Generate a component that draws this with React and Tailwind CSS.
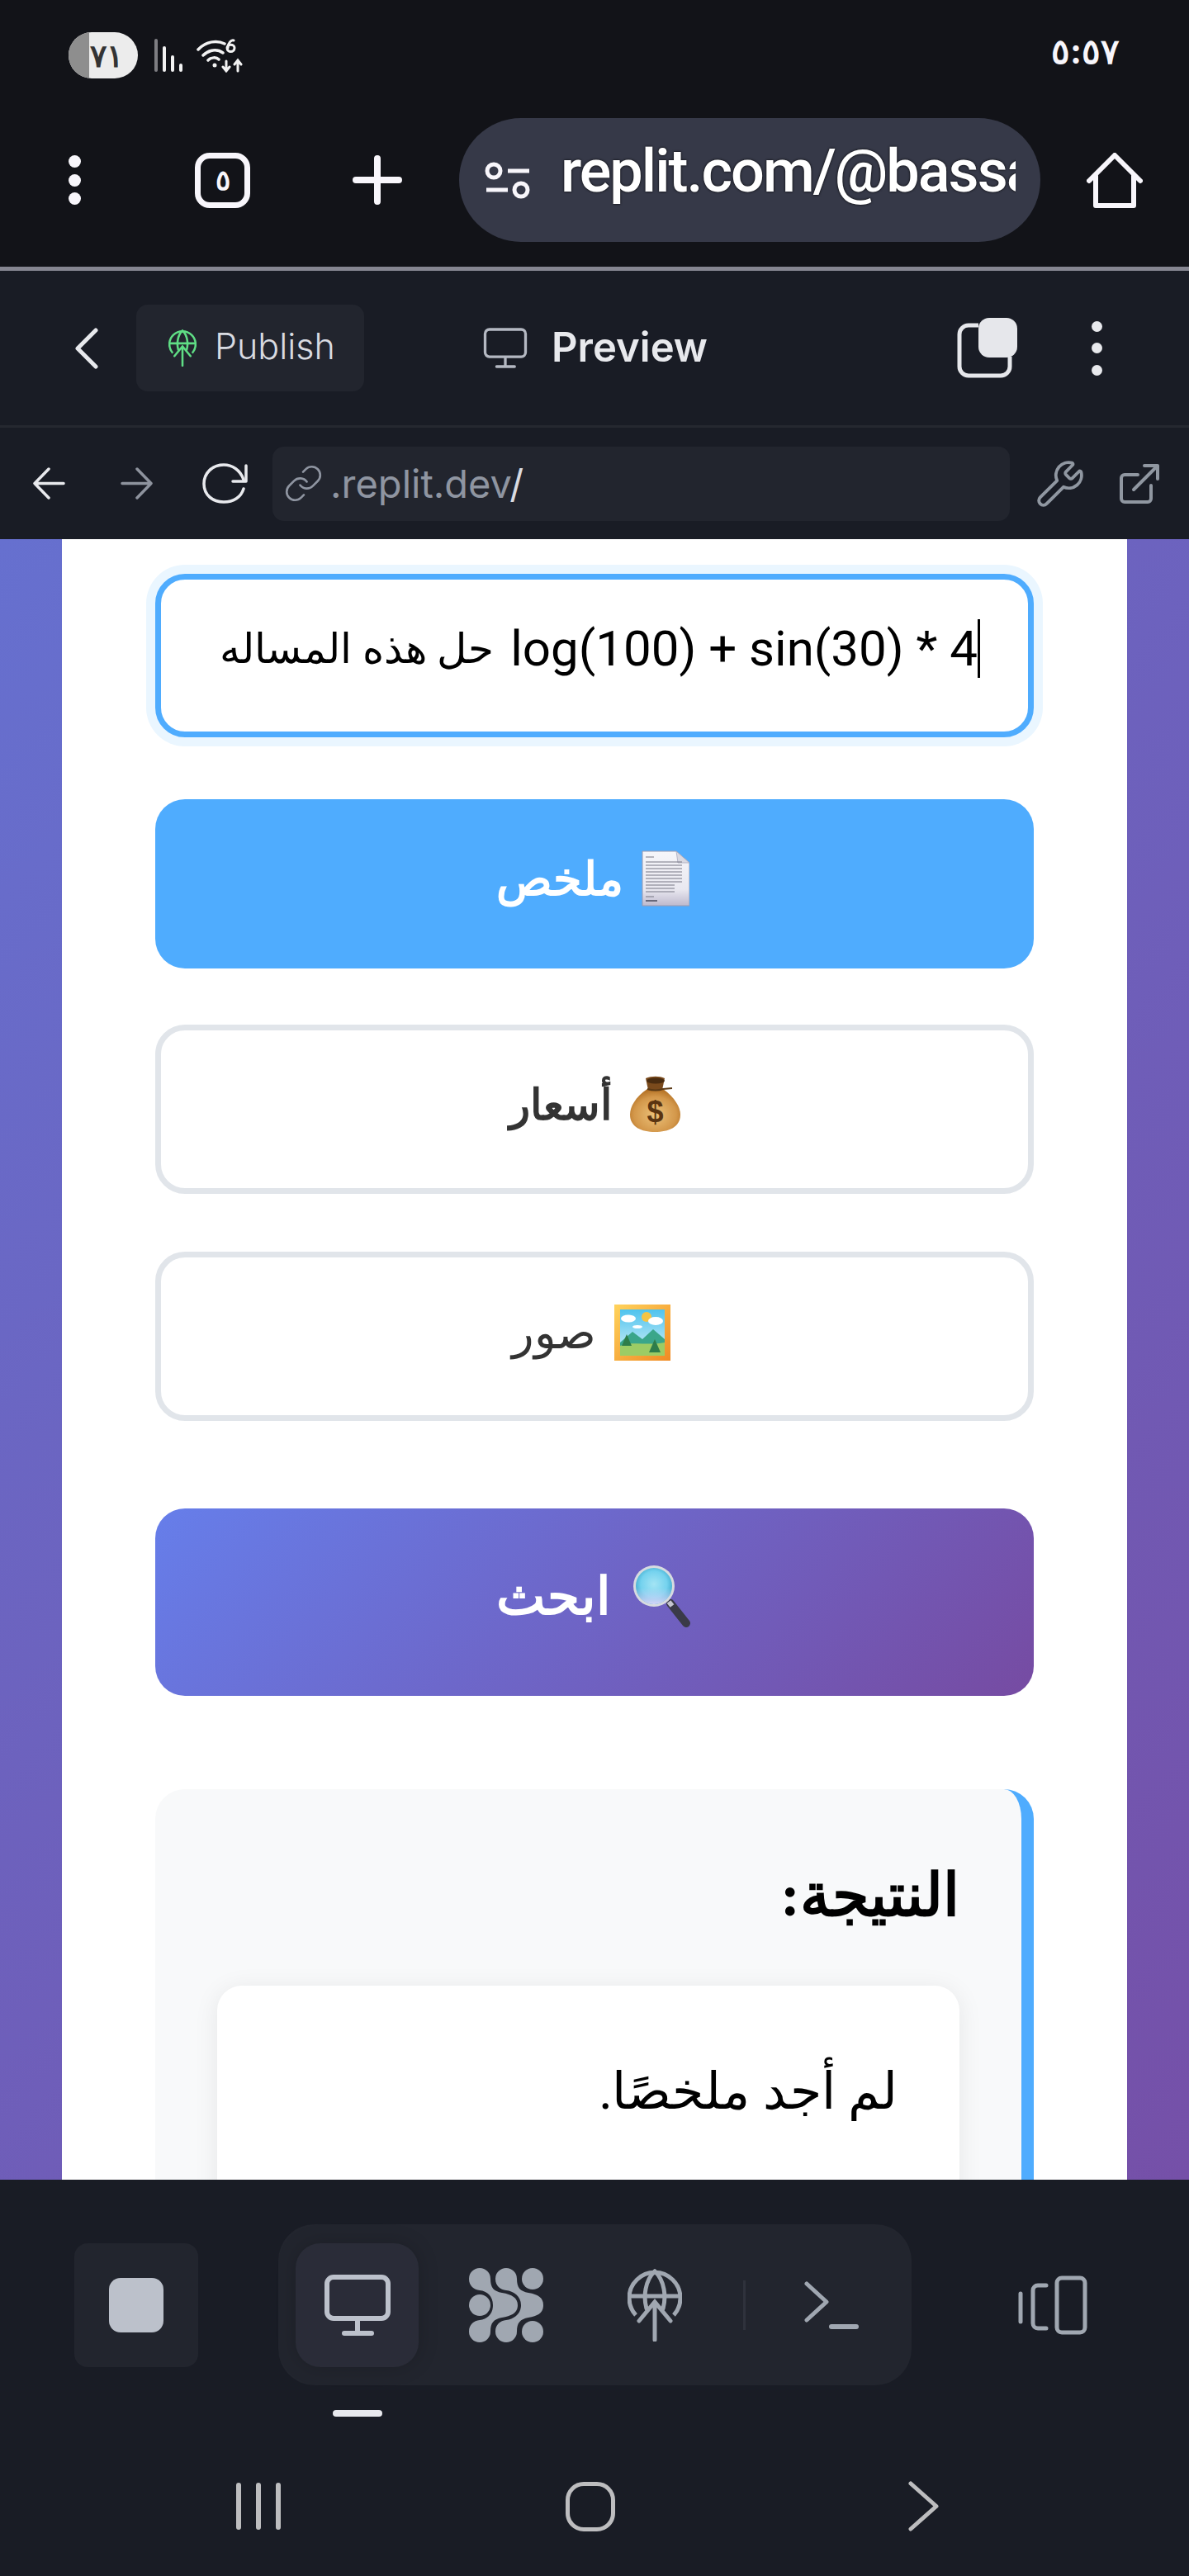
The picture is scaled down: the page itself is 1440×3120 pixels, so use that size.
import { Link as LinkIcon, Wrench } from 'lucide-react'

function Dots({ className, r = 7 }) {
  return (
    <div className={'flex flex-col items-center justify-between ' + className}>
      <span className="rounded-full bg-current" style={{ width: r * 2, height: r * 2 }} />
      <span className="rounded-full bg-current" style={{ width: r * 2, height: r * 2 }} />
      <span className="rounded-full bg-current" style={{ width: r * 2, height: r * 2 }} />
    </div>
  )
}

function PublishGlobe({ className, stroke = 5 }) {
  return (
    <svg viewBox="0 0 66 88" fill="none" stroke="currentColor" strokeWidth={stroke} strokeLinecap="round" className={className}>
      <path d="M10 56 A31 31 0 1 1 56 56" strokeLinecap="butt" />
      <path d="M33 3 C21 14 19 34 23 48" />
      <path d="M33 3 C45 14 47 34 43 48" />
      <path d="M3 33 H63" />
      <path d="M33 86 V40 M14 63 L33 40 L52 63" />
    </svg>
  )
}

function Monitor({ className, stroke = 4 }) {
  return (
    <svg viewBox="0 0 80 74" fill="none" stroke="currentColor" strokeWidth={stroke} strokeLinecap="round" className={className}>
      <rect x="3" y="3" width="74" height="50" rx="8" />
      <path d="M40 53 V70" strokeLinecap="butt" />
      <path d="M24 71 H57" />
    </svg>
  )
}

function DocEmoji() {
  return (
    <svg viewBox="0 0 58 68" className="w-[58px] h-[68px] shrink-0">
      <defs>
        <linearGradient id="paper" x1="0" y1="0" x2="0" y2="1">
          <stop offset="0" stopColor="#f6f6fa" />
          <stop offset="0.7" stopColor="#e9e8f0" />
          <stop offset="1" stopColor="#bdb9cd" />
        </linearGradient>
      </defs>
      <path d="M1 1 H42 L58 15 V67 H1 Z" fill="url(#paper)" stroke="#9a9ab0" strokeWidth="1" />
      <path d="M42 1 L44 15 H58 Z" fill="#d9d9e2" stroke="#a9a9bc" strokeWidth="0.8" />
      <path d="M5 8 H15 M5 14 H49 M5 18 H49 M5 22 H49 M5 26 H49 M5 30 H49 M5 34 H49 M5 38 H49 M5 42 H40 M5 46 H40 M5 50 H40 M5 56 H15" stroke="#777784" strokeWidth="1.1" fill="none" />
      <path d="M5 61 H19" stroke="#68687a" strokeWidth="2" />
    </svg>
  )
}

function BagEmoji() {
  return (
    <svg viewBox="0 0 61 69" className="w-[61px] h-[69px] shrink-0">
      <defs>
        <radialGradient id="bag" cx="0.5" cy="0.6" r="0.6">
          <stop offset="0" stopColor="#ecc27a" />
          <stop offset="0.7" stopColor="#d3974a" />
          <stop offset="1" stopColor="#b26f22" />
        </radialGradient>
      </defs>
      <path d="M21 16 C6 26 0 38 0 47 C0 62 14 68 30 68 C47 68 61 62 61 47 C61 38 54 26 40 16 Z" fill="url(#bag)" />
      <path d="M19 3 C26 0 36 0 42 3 L39 17 H22 Z" fill="#7a4a1c" />
      <ellipse cx="31" cy="6" rx="11" ry="3.5" fill="#4a2c10" />
      <path d="M21 16 C28 18 34 18 40 16 L51 15" stroke="#5b3a16" strokeWidth="2" fill="none" />
      <text x="30.5" y="56" textAnchor="middle" fontSize="36" fontWeight="700" fill="#5a3411" className="[font-family:'Liberation_Sans',sans-serif]">$</text>
    </svg>
  )
}

function PictureEmoji() {
  return (
    <svg viewBox="0 0 68 68" className="w-[68px] h-[68px] shrink-0">
      <defs>
        <linearGradient id="frame" x1="0" y1="0" x2="1" y2="1">
          <stop offset="0" stopColor="#ffd35c" />
          <stop offset="1" stopColor="#f08a24" />
        </linearGradient>
        <linearGradient id="sky" x1="0" y1="0" x2="0" y2="1">
          <stop offset="0" stopColor="#4fc3ee" />
          <stop offset="1" stopColor="#d4f1f8" />
        </linearGradient>
      </defs>
      <rect width="68" height="68" fill="url(#frame)" />
      <rect x="7" y="6" width="54" height="56" fill="url(#sky)" />
      <circle cx="39" cy="15" r="6" fill="#f6c445" />
      <ellipse cx="17" cy="17" rx="9" ry="4.5" fill="#fff" />
      <ellipse cx="50" cy="20" rx="9" ry="5" fill="#fff" />
      <ellipse cx="28" cy="27" rx="6" ry="2" fill="#fff" />
      <path d="M7 46 L22 33 L34 42 L47 30 L61 42 V62 H7 Z" fill="#3aa68a" />
      <path d="M7 50 C24 44 40 50 61 46 V62 H7 Z" fill="#9ccc65" />
      <path d="M15 36 L21 50 H9 Z M49 42 L56 58 H42 Z" fill="#2e7d4a" />
    </svg>
  )
}

function GlassEmoji() {
  return (
    <svg viewBox="0 0 70 77" className="w-[70px] h-[77px] shrink-0">
      <defs>
        <radialGradient id="lens" cx="0.5" cy="0.45" r="0.6">
          <stop offset="0" stopColor="#a4e4f4" />
          <stop offset="0.6" stopColor="#74d2ee" />
          <stop offset="1" stopColor="#2f9fc4" />
        </radialGradient>
        <linearGradient id="lensLow" x1="0" y1="0" x2="0" y2="1">
          <stop offset="0.55" stopColor="#d8d6fa" stopOpacity="0" />
          <stop offset="1" stopColor="#d8d6fa" />
        </linearGradient>
      </defs>
      <path d="M46 48 L65 72" stroke="#3a3a48" strokeWidth="10" strokeLinecap="round" />
      <path d="M44 46 L48 51" stroke="#c5c5cf" strokeWidth="6" />
      <circle cx="26" cy="27" r="25" fill="#d7dbe0" />
      <circle cx="26" cy="27" r="22" fill="url(#lens)" />
      <circle cx="26" cy="27" r="22" fill="url(#lensLow)" />
    </svg>
  )
}

function AgentLogo({ className }) {
  return (
    <svg viewBox="0 0 90 90" fill="#a0a7b1" className={className}>
      <path d="M0 13 A13 13 0 0 1 26 13 C26 24 30 28 40 30 C52 32 59 36 59 45 C59 54 52 58 40 60 C30 62 26 66 26 77 A13 13 0 0 1 0 77 C0 68 6 64 13 63 C22 62 29 56 29 45 C29 34 22 28 13 27 C6 26 0 22 0 13 Z" />
      <path d="M32 13 A13 13 0 0 1 58 13 C58 24 62 28 72 30 C84 32 90 36 90 45 C90 54 84 58 72 60 C62 62 58 66 58 77 A13 13 0 0 1 32 77 C32 68 38 64 45 63 C54 62 63 56 63 45 C63 34 54 28 45 27 C38 26 32 22 32 13 Z" />
      <circle cx="13" cy="45" r="13" />
      <circle cx="77" cy="13" r="13" />
      <circle cx="77" cy="77" r="13" />
    </svg>
  )
}

const optionBtn = "h-[205px] rounded-[36px] flex items-center justify-center gap-[22px] font-semibold"

export default function App() {
  return (
    <div className="w-[1440px] h-[3120px] flex flex-col overflow-hidden bg-[#191c25] [font-family:Inter,'Noto_Sans',sans-serif]">
      {/* phone + browser chrome */}
      <div className="h-[323px] shrink-0 bg-[#121318] text-[#f8f6fb] flex flex-col">
        <div className="h-[134px] flex items-center">
          <div className="ml-[83px] w-[84px] h-[56px] rounded-[28px] overflow-hidden flex bg-[#ececec]">
            <div className="w-[25px] bg-[#8e8e8e]" />
            <div className="flex-1 flex items-center pl-[1px] text-[38px] font-semibold leading-none text-[#333]">٧١</div>
          </div>
          <svg viewBox="0 0 35 40" className="ml-[20px] w-[35px] h-[40px]" strokeLinecap="round" strokeWidth="4" fill="none">
            <path d="M2 2 V38" stroke="#7e7e82" />
            <path d="M12 11 V38 M22 22 V38 M32 32 V38" stroke="#f2f2f2" />
          </svg>
          <svg viewBox="0 0 57 42" className="ml-[16px] w-[57px] h-[42px]" fill="none" stroke="#f2f2f2" strokeWidth="3.5" strokeLinecap="round">
            <path d="M2 14 C12 3 26 3 34 7 M8 21 C15 14 25 13 32 18 M14 27 C18 23 24 23 27 26" />
            <circle cx="22" cy="33" r="2.5" fill="#f2f2f2" stroke="none" />
            <path d="M38 12 C38 6 42 2 45 3 M37 12 C37 18 46 18 46 12 C46 7 37 7 37 12 M36 28 V40 M32 35 L36 40 L40 35 M50 28 V40 M46 32 L50 27 L54 32" strokeWidth="3" />
          </svg>
          <div dir="ltr" className="ml-auto mr-[84px] mb-[10px] text-[42px] font-bold leading-none">٥:٥٧</div>
        </div>

        <div className="mt-[9px] h-[150px] flex items-center">
          <Dots className="ml-[83px] w-[15px] h-[60px]" r={7.5} />
          <div className="ml-[138px] w-[67px] h-[67px] rounded-[18px] border-[7px] border-[#f8f6fb] flex items-center justify-center text-[34px] font-bold leading-none">٥</div>
          <svg viewBox="0 0 60 60" className="ml-[124px] w-[60px] h-[60px]" stroke="#f8f6fb" strokeWidth="8" strokeLinecap="round">
            <path d="M4 30 H56 M30 4 V56" />
          </svg>
          <div className="ml-[69px] w-[704px] h-[150px] rounded-[75px] bg-[#363948] flex items-center">
            <svg viewBox="0 0 56 47" className="ml-[31px] w-[56px] h-[47px] shrink-0" fill="none" stroke="#f8f6fb" strokeWidth="5">
              <circle cx="11" cy="12" r="8" />
              <path d="M28 12 H54 M2 35 H28" />
              <circle cx="44" cy="35" r="8" />
            </svg>
            <div className="ml-[36px] mb-[20px] w-[551px] overflow-hidden whitespace-nowrap text-[72px] font-medium leading-[1.2] tracking-[-2px] text-white [font-family:Roboto,sans-serif] [text-shadow:0_0_3px_#000]">replit.com/@bassam</div>
          </div>
          <svg viewBox="0 0 68 67" className="ml-[56px] w-[68px] h-[67px]" fill="none" stroke="#f8f6fb" strokeWidth="6" strokeLinecap="round" strokeLinejoin="round">
            <path d="M3 34 L34 3 L65 34 M11 28 V64 H57 V28" />
          </svg>
        </div>
      </div>
      <div className="h-[5px] shrink-0 bg-[#868691]" />

      {/* replit header */}
      <div className="h-[187px] shrink-0 flex items-center border-b-[3px] border-[#252830] box-content">
        <svg viewBox="0 0 28 50" className="ml-[91px] w-[28px] h-[50px]" fill="none" stroke="#e8e9ed" strokeWidth="5" strokeLinecap="round" strokeLinejoin="round">
          <path d="M25 3 L3 25 L25 47" />
        </svg>
        <div className="ml-[46px] w-[276px] h-[105px] rounded-[14px] bg-[#22252e] flex items-center pl-[39px]">
          <PublishGlobe className="w-[34px] h-[45px] text-[#5fdd85]" />
          <span className="ml-[22px] mb-[5px] text-[43px] font-light leading-none text-[#d9dbe1]">Publish</span>
        </div>
        <Monitor className="ml-[144px] w-[54px] h-[49px] text-[#b4b8c2]" stroke={5} />
        <span className="ml-[29px] mb-[2px] text-[49px] font-semibold leading-none text-[#e8e9ed]">Preview</span>
        <svg viewBox="0 0 73 73" className="ml-auto w-[73px] h-[73px]" fill="none">
          <path d="M26 9 H14 a11 11 0 0 0 -11 11 V59 a11 11 0 0 0 11 11 H53 a11 11 0 0 0 11 -11 V47" stroke="#e6e7eb" strokeWidth="5" />
          <rect x="26" y="0" width="47" height="48" rx="13" fill="#e6e7eb" />
        </svg>
        <Dots className="ml-[89px] mr-[105px] w-[14px] h-[66px] text-[#e8e9ed]" r={6.5} />
      </div>

      {/* url row */}
      <div className="h-[135px] shrink-0 flex items-center">
        <svg viewBox="0 0 39 39" className="ml-[40px] w-[39px] h-[39px]" fill="none" stroke="#e8e9ed" strokeWidth="3.5" strokeLinecap="round" strokeLinejoin="round">
          <path d="M37 19.5 H2 M19 2 L2 19.5 L19 37" />
        </svg>
        <svg viewBox="0 0 39 39" className="ml-[67px] w-[39px] h-[39px]" fill="none" stroke="#8e939e" strokeWidth="3.5" strokeLinecap="round" strokeLinejoin="round">
          <path d="M2 19.5 H37 M20 2 L37 19.5 L20 37" />
        </svg>
        <svg viewBox="0 0 55 49" className="ml-[60px] w-[55px] h-[49px]" fill="none" stroke="#e8e9ed" strokeWidth="3.5" strokeLinecap="round" strokeLinejoin="round">
          <path d="M50 20 C46 8 36 2 26 2 C12 2 2 12 2 25 C2 38 12 47 26 47 C38 47 47 41 50 31" />
          <path d="M53 3 V22 H37" />
        </svg>
        <div className="ml-[30px] w-[893px] h-[90px] rounded-[14px] bg-[#22252e] flex items-center pl-[17px]">
          <LinkIcon size={49} strokeWidth={1.3} className="-m-[4px] text-[#8f95a1]" />
          <span className="ml-[12px] text-[47px] leading-none text-[#8f95a1]">.replit.dev<span className="text-[#d9dbe1]">/</span></span>
        </div>
        <Wrench size={62} strokeWidth={1.5} className="ml-[30px] -mr-[5px] text-[#9097a1]" />
        <svg viewBox="0 0 50 50" className="ml-[45px] w-[50px] h-[50px]" fill="none" stroke="#9097a1" strokeWidth="4" strokeLinecap="round" strokeLinejoin="round">
          <path d="M23 14 H7 a4 4 0 0 0 -4 4 V43 a4 4 0 0 0 4 4 H35 a4 4 0 0 0 4 -4 V27" />
          <path d="M18 32 L47 3 M31 3 H47 V19" />
        </svg>
      </div>

      {/* page */}
      <main className="flex-1 min-h-0 overflow-hidden bg-[linear-gradient(135deg,#6670cf,#7550a8)]">
        <div className="mx-[75px] h-full bg-white pt-[42px] px-[113px] flex flex-col">
          <div dir="ltr" className="h-[198px] shrink-0 rounded-[36px] border-[7px] border-[#4facfe] bg-white shadow-[0_0_0_11px_#eaf6ff] flex items-center justify-end pr-[58px] pb-[17px] leading-none text-black [font-family:Roboto,sans-serif]">
            <span className="whitespace-nowrap text-[50px]">حل هذه المساله</span>
            <span className="ml-[20px] whitespace-nowrap text-[60px]">log(100) + sin(30) * 4</span>
            <span className="w-[3px] h-[71px] bg-black" />
          </div>

          <button dir="rtl" className={optionBtn + " mt-[75px] pb-[14px] pr-[4px] text-[56px] shrink-0 bg-[#4facfe] text-white"}>
            <DocEmoji />
            <span>ملخص</span>
          </button>
          <button dir="rtl" className={optionBtn + " mt-[68px] pb-[12px] text-[52px] shrink-0 border-[7px] border-[#e1e5ea] bg-white text-[#333]"}>
            <BagEmoji />
            <span>أسعار</span>
          </button>
          <button dir="rtl" className={optionBtn + " mt-[70px] pb-[10px] pr-[8px] text-[55px] shrink-0 border-[7px] border-[#e1e5ea] bg-white text-[#333] !font-normal"}>
            <PictureEmoji />
            <span>صور</span>
          </button>

          <button dir="rtl" className="mt-[106px] h-[227px] pb-[16px] pr-[4px] shrink-0 rounded-[36px] bg-[linear-gradient(135deg,#667eea,#764ba2)] flex items-center justify-center gap-[26px] text-[63px] font-bold text-white">
            <GlassEmoji />
            <span>ابحث</span>
          </button>

          <div dir="rtl" className="mt-[113px] shrink-0 rounded-[36px] border-r-[15px] border-[#4facfe] bg-[#f8f9fa] pl-[75px] pr-[75px] pt-[90px] pb-[80px] text-black">
            <h3 className="text-[72px] font-bold leading-[78px] [font-family:'Liberation_Serif',serif]">النتيجة:</h3>
            <div className="mt-[70px] h-[400px] rounded-[30px] bg-white pt-[89px] px-[75px] shadow-[0_4px_30px_rgba(0,0,0,0.08)]">
              <p className="text-[62px] leading-[78px] [font-family:'Liberation_Serif',serif]">لم أجد ملخصًا.</p>
            </div>
          </div>
        </div>
      </main>

      {/* replit bottom bar */}
      <div className="h-[480px] shrink-0 bg-[#191c25] flex flex-col">
        <div className="mt-[54px] flex items-center">
          <div className="ml-[90px] w-[150px] h-[150px] rounded-[16px] bg-[#22252e] flex items-center justify-center">
            <span className="w-[66px] h-[66px] rounded-[14px] bg-[#bcc1cb]" />
          </div>
          <div className="ml-[97px] w-[767px] h-[195px] rounded-[44px] bg-[#22252e] flex items-center">
            <div className="ml-[21px] w-[149px] h-[150px] rounded-[30px] bg-[#2a2c38] shadow-[0_0_24px_rgba(0,0,0,0.18)] flex items-center justify-center">
              <Monitor className="w-[80px] h-[74px] text-[#bcc1cb]" stroke={6} />
            </div>
            <AgentLogo className="ml-[61px] w-[90px] h-[90px]" />
            <PublishGlobe className="ml-[102px] w-[66px] h-[88px] text-[#a0a7b1]" />
            <div className="ml-[74px] w-[3px] h-[60px] bg-[#2f323c]" />
            <svg viewBox="0 0 66 58" className="ml-[71px] w-[66px] h-[58px]" fill="none" stroke="#a0a7b1" strokeWidth="5" strokeLinecap="round" strokeLinejoin="round">
              <path d="M3 3 L27 25 L3 47" />
              <path d="M33 55 H63" strokeWidth="6" />
            </svg>
          </div>
          <svg viewBox="0 0 84 72" className="ml-[129px] w-[84px] h-[72px]" fill="none" stroke="#a0a7b1" strokeWidth="5" strokeLinecap="round">
            <rect x="47" y="3" width="34" height="66" rx="6" />
            <path d="M34 12 H24 a6 6 0 0 0 -6 6 V58 a6 6 0 0 0 6 6 H34" />
            <path d="M3 22 V56" />
          </svg>
        </div>
        <div className="ml-[403px] mt-[30px] w-[60px] h-[8px] rounded-full bg-[#e8e9ee]" />
        <div className="mt-[78px] flex items-center">
          <div className="ml-[286px] flex gap-[18px]">
            <span className="w-[6px] h-[57px] rounded-full bg-[#bdbdbf]" />
            <span className="w-[6px] h-[57px] rounded-full bg-[#bdbdbf]" />
            <span className="w-[6px] h-[57px] rounded-full bg-[#bdbdbf]" />
          </div>
          <div className="ml-[345px] w-[60px] h-[60px] rounded-[22px] border-[5px] border-[#bdbdbf]" />
          <svg viewBox="0 0 37 61" className="ml-[355px] w-[37px] h-[61px]" fill="none" stroke="#bdbdbf" strokeWidth="5" strokeLinecap="round" strokeLinejoin="round">
            <path d="M3 3 L34 30.5 L3 58" />
          </svg>
        </div>
      </div>
    </div>
  )
}
